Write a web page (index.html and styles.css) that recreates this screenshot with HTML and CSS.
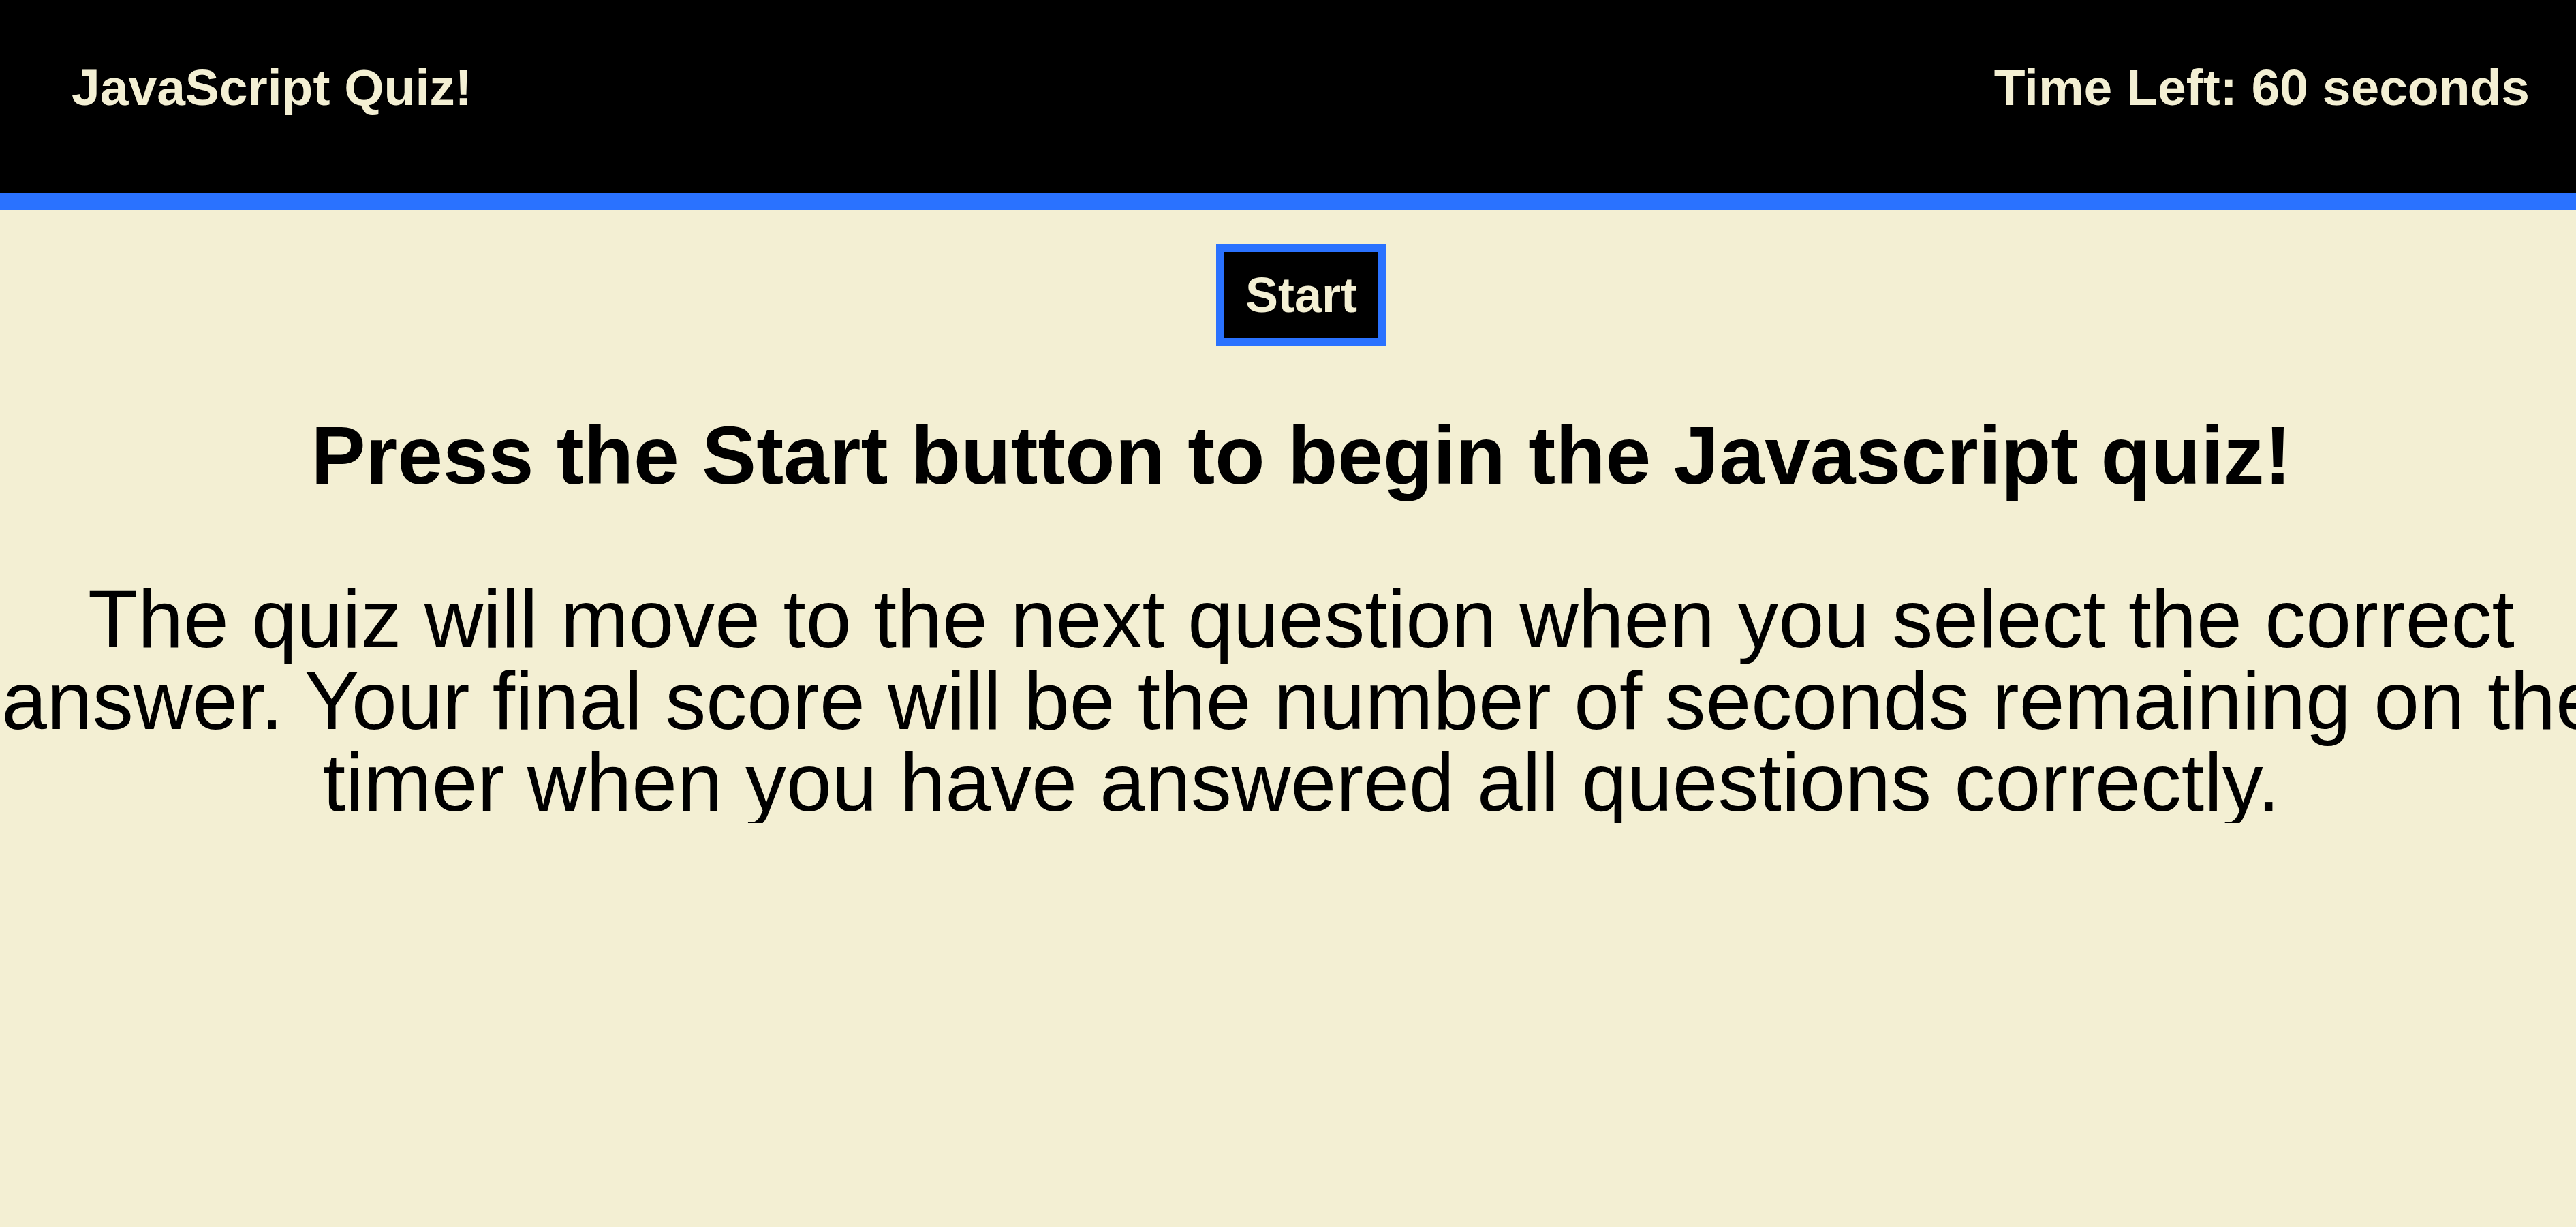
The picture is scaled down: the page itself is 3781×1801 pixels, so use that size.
FILE: index.html
```html
<!DOCTYPE html>
<html lang="en">
<head>
<meta charset="utf-8">
<title>JavaScript Quiz!</title>
<link rel="stylesheet" href="styles.css">
</head>
<body>
<header class="topbar">
  <span class="brand">JavaScript Quiz!</span>
  <span class="timer">Time Left: 60 seconds</span>
</header>
<main class="content">
  <div class="start-row">
    <button class="start-btn" type="button">Start</button>
  </div>
  <h1 class="intro-title">Press the Start button to begin the Javascript quiz!</h1>
  <p class="intro-text">The quiz will move to the next question when you select the correct answer. Your final score will be the number of seconds remaining on the timer when you have answered all questions correctly.</p>
</main>
</body>
</html>
```
FILE: styles.css
```css
html {
  overflow-x: hidden;
}

body {
  margin: 0;
  background: #f3efd3;
  color: #000;
  font-family: "Liberation Sans", Arial, sans-serif;
}

.topbar {
  box-sizing: border-box;
  height: 308px;
  display: flex;
  justify-content: space-between;
  align-items: flex-start;
  padding: 91px 68px 0 105px;
  background: #000;
  border-bottom: 25px solid #2a72ff;
  color: #f3efd3;
  font-size: 75px;
  font-weight: bold;
  line-height: 1;
}

.content {
  padding-left: 39px;
  text-align: center;
}

.start-row {
  display: flex;
  justify-content: center;
  margin-top: 50px;
}

.start-btn {
  box-sizing: border-box;
  width: 250px;
  height: 150px;
  display: flex;
  align-items: center;
  justify-content: center;
  padding: 0;
  background: #000;
  border: 12px solid #2a72ff;
  color: #f3efd3;
  font-family: "Liberation Sans", Arial, sans-serif;
  font-size: 72px;
  font-weight: bold;
  line-height: 1;
  cursor: pointer;
}

.intro-title {
  margin: 100px 0 0;
  font-size: 120px;
  font-weight: bold;
  line-height: 1;
}

.intro-text {
  margin: 120px -60px 0;
  font-size: 120px;
  line-height: 1;
}
```
